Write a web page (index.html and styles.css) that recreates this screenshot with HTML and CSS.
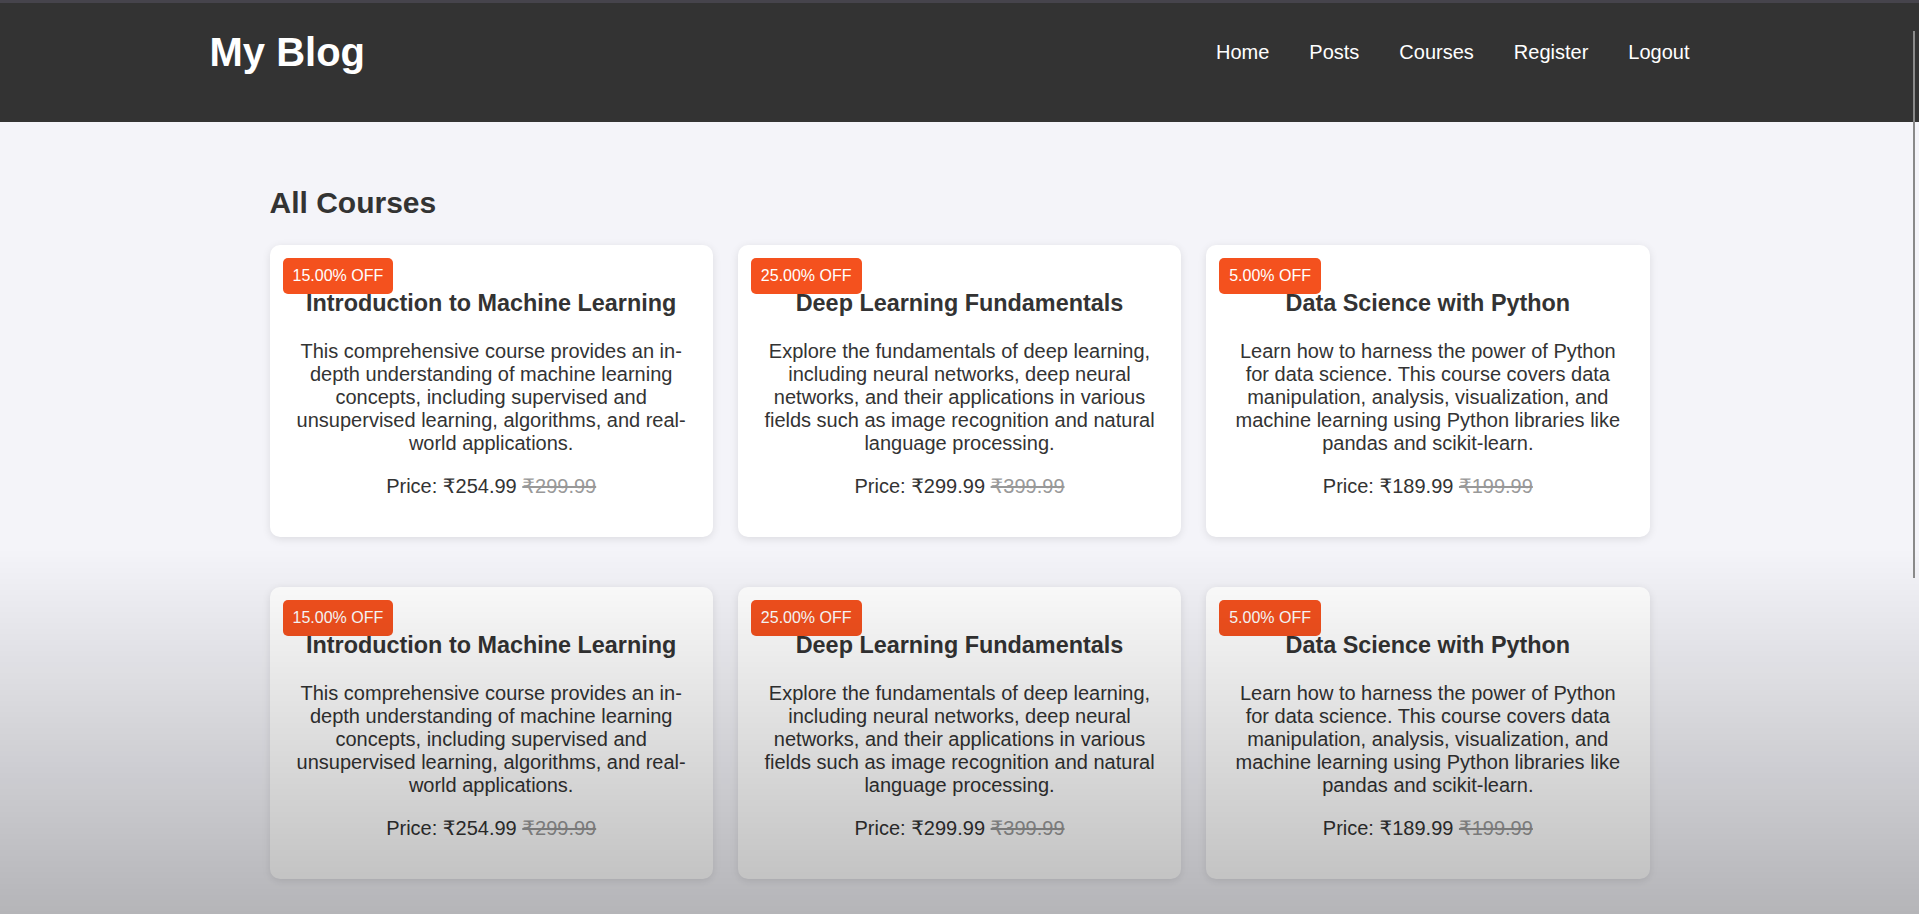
FILE: index.html
```html
<!DOCTYPE html>
<html lang="en">
<head>
<meta charset="utf-8">
<title>My Blog - Courses</title>
<link rel="stylesheet" href="styles.css">
</head>
<body>
<header class="site-header">
  <div class="header-inner">
    <h1 class="logo">My Blog</h1>
    <nav class="nav">
      <a href="#">Home</a>
      <a href="#">Posts</a>
      <a href="#">Courses</a>
      <a href="#">Register</a>
      <a href="#">Logout</a>
    </nav>
  </div>
</header>
<main class="main">
  <div class="container">
    <h2 class="page-title">All Courses</h2>
    <div class="course-grid">
      <div class="card">
        <span class="badge">15.00% OFF</span>
        <h3 class="card-title">Introduction to Machine Learning</h3>
        <p class="card-desc">This comprehensive course provides an in-depth understanding of machine learning concepts, including supervised and unsupervised learning, algorithms, and real-world applications.</p>
        <p class="price">Price: ₹254.99 <span class="old-price">₹299.99</span></p>
      </div>
      <div class="card">
        <span class="badge">25.00% OFF</span>
        <h3 class="card-title">Deep Learning Fundamentals</h3>
        <p class="card-desc">Explore the fundamentals of deep learning, including neural networks, deep neural networks, and their applications in various fields such as image recognition and natural language processing.</p>
        <p class="price">Price: ₹299.99 <span class="old-price">₹399.99</span></p>
      </div>
      <div class="card">
        <span class="badge">5.00% OFF</span>
        <h3 class="card-title">Data Science with Python</h3>
        <p class="card-desc">Learn how to harness the power of Python for data science. This course covers data manipulation, analysis, visualization, and machine learning using Python libraries like pandas and scikit-learn.</p>
        <p class="price">Price: ₹189.99 <span class="old-price">₹199.99</span></p>
      </div>
      <div class="card">
        <span class="badge">15.00% OFF</span>
        <h3 class="card-title">Introduction to Machine Learning</h3>
        <p class="card-desc">This comprehensive course provides an in-depth understanding of machine learning concepts, including supervised and unsupervised learning, algorithms, and real-world applications.</p>
        <p class="price">Price: ₹254.99 <span class="old-price">₹299.99</span></p>
      </div>
      <div class="card">
        <span class="badge">25.00% OFF</span>
        <h3 class="card-title">Deep Learning Fundamentals</h3>
        <p class="card-desc">Explore the fundamentals of deep learning, including neural networks, deep neural networks, and their applications in various fields such as image recognition and natural language processing.</p>
        <p class="price">Price: ₹299.99 <span class="old-price">₹399.99</span></p>
      </div>
      <div class="card">
        <span class="badge">5.00% OFF</span>
        <h3 class="card-title">Data Science with Python</h3>
        <p class="card-desc">Learn how to harness the power of Python for data science. This course covers data manipulation, analysis, visualization, and machine learning using Python libraries like pandas and scikit-learn.</p>
        <p class="price">Price: ₹189.99 <span class="old-price">₹199.99</span></p>
      </div>
    </div>
  </div>
</main>
<div class="fade-overlay"></div>
<div class="scroll-thumb"></div>
</body>
</html>
```

FILE: styles.css
```css
html {
  scrollbar-width: none;
}
html::-webkit-scrollbar {
  display: none;
}
body {
  margin: 0;
  background: #f4f4f9;
  color: #333;
  font-family: "Liberation Sans", Arial, "DejaVu Sans", sans-serif;
  font-size: 20px;
}

.site-header {
  background: #333;
  border-top: 3px solid #46444c;
  padding: 27px 0 47px;
}
.header-inner {
  max-width: 1500px;
  margin: 0 auto;
  display: flex;
  justify-content: space-between;
  align-items: center;
}
.logo {
  margin: 0;
  color: #fff;
  font-size: 40px;
  font-weight: bold;
  line-height: normal;
}
.nav {
  display: flex;
  margin-top: -1px;
}
.nav a {
  color: #fff;
  text-decoration: none;
  margin: 0 20px;
  font-size: 20px;
}

.main {
  padding: 39px 0 30px;
}
.container {
  max-width: 1380px;
  margin: 0 auto;
}
.page-title {
  font-size: 30px;
  margin: 0.83em 0;
  color: #333;
}
.course-grid {
  display: grid;
  grid-template-columns: repeat(3, 1fr);
  gap: 50px 25px;
}
.card {
  position: relative;
  background: #fff;
  border-radius: 10px;
  padding: 20px;
  text-align: center;
  box-shadow: 0 2px 8px rgba(0, 0, 0, 0.1);
}
.badge {
  position: absolute;
  top: 13px;
  left: 13px;
  background: #f4511e;
  color: #fff;
  font-size: 16px;
  padding: 9px 10px;
  border-radius: 5px;
  line-height: normal;
}
.card-title {
  font-size: 1.17em;
  margin: 25px 0 23px;
  color: #333;
}
.card-desc {
  margin: 0 0 19px;
  color: #333;
}
.price {
  margin: 19px 0 19px;
  color: #333;
}
.old-price {
  color: #999;
  text-decoration: line-through;
}

.fade-overlay {
  position: fixed;
  inset: 0;
  pointer-events: none;
  background: linear-gradient(to bottom, rgba(0, 0, 0, 0) 0%, rgba(0, 0, 0, 0) 60%, rgba(0, 0, 0, 0.26) 100%);
}
.scroll-thumb {
  position: fixed;
  top: 31px;
  right: 4px;
  width: 2px;
  height: 547px;
  background: #8a8a8a;
}
```
